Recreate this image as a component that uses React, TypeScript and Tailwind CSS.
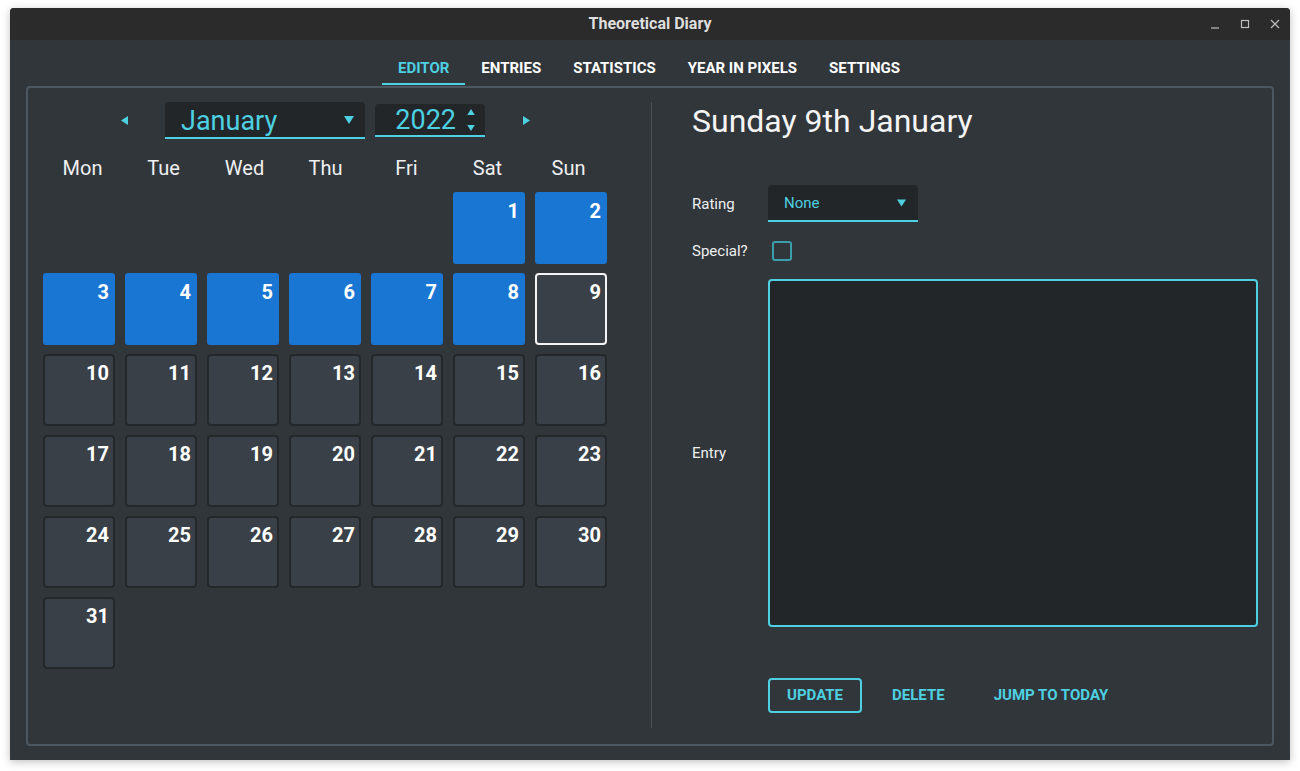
import React from "react";

const CYAN = "#4dd0e1";

function TriDown({ w = 10, h = 8, color = CYAN }: { w?: number; h?: number; color?: string }) {
  return (
    <svg width={w} height={h} viewBox="0 0 10 8">
      <polygon points="0,0 10,0 5,8" fill={color} />
    </svg>
  );
}
function TriUp({ w = 8, h = 6 }: { w?: number; h?: number }) {
  return (
    <svg width={w} height={h} viewBox="0 0 10 8">
      <polygon points="0,8 10,8 5,0" fill={CYAN} />
    </svg>
  );
}
function TriLeft() {
  return (
    <svg width="7" height="9" viewBox="0 0 7 9">
      <polygon points="7,0 7,9 0,4.5" fill={CYAN} />
    </svg>
  );
}
function TriRight() {
  return (
    <svg width="7" height="9" viewBox="0 0 7 9">
      <polygon points="0,0 0,9 7,4.5" fill={CYAN} />
    </svg>
  );
}

type Cell = { day: number | null; kind: "blue" | "grey" | "sel" | "none" };

function buildCells(): Cell[] {
  const cells: Cell[] = [];
  for (let i = 0; i < 5; i++) cells.push({ day: null, kind: "none" });
  for (let d = 1; d <= 31; d++) {
    if (d <= 8) cells.push({ day: d, kind: "blue" });
    else if (d === 9) cells.push({ day: d, kind: "sel" });
    else cells.push({ day: d, kind: "grey" });
  }
  return cells;
}

function DayCell({ c }: { c: Cell }) {
  if (c.kind === "none") return <div className="w-[72px] h-[72px]" />;
  const cls =
    c.kind === "blue"
      ? "bg-[#1976d2] border-[#1976d2] rounded-[3px]"
      : c.kind === "sel"
      ? "bg-[#394047] border-[#f4f4f4] rounded-[4px]"
      : "bg-[#394047] border-[#24282b] rounded-[4px]";
  return (
    <div className={`w-[72px] h-[72px] border-2 ${cls} flex justify-end items-start pr-[4px] pt-[5px]`}>
      <span className="text-[20px] leading-[24px] font-bold text-white">{c.day}</span>
    </div>
  );
}

export default function App() {
  const cells = buildCells();
  const days = ["Mon", "Tue", "Wed", "Thu", "Fri", "Sat", "Sun"];
  const tabs = ["EDITOR", "ENTRIES", "STATISTICS", "YEAR IN PIXELS", "SETTINGS"];
  return (
    <div
      className="w-[1300px] h-[771px] bg-white pt-[8px] pl-[10px] overflow-hidden"
      style={{ fontFamily: "Roboto, 'Liberation Sans', sans-serif" }}
    >
      <div className="w-[1280px] h-[752px] bg-[#31363b] rounded-t-[4px] shadow-[0_2px_8px_rgba(0,0,0,0.25)] flex flex-col">
        {/* Title bar */}
        <div className="h-[32px] bg-[#2b2b2b] rounded-t-[4px] relative flex items-center justify-center shrink-0">
          <span className="text-[16px] font-bold text-[#dedede]">Theoretical Diary</span>
          <div className="absolute right-[10px] top-0 h-[32px] flex items-center gap-[20px]">
            <svg width="10" height="10" viewBox="0 0 10 10">
              <line x1="1" y1="9" x2="9" y2="9" stroke="#bdbdbd" strokeWidth="1.2" />
            </svg>
            <svg width="10" height="10" viewBox="0 0 10 10">
              <rect x="1.5" y="1.5" width="7" height="7" fill="none" stroke="#bdbdbd" strokeWidth="1.2" />
            </svg>
            <svg width="10" height="10" viewBox="0 0 10 10">
              <path d="M1 1 L9 9 M9 1 L1 9" stroke="#bdbdbd" strokeWidth="1.2" />
            </svg>
          </div>
        </div>

        {/* Body */}
        <div className="flex-1 px-[16px] pb-[14px] flex flex-col">
          {/* Tabs */}
          <div className="flex justify-center pt-[12px] shrink-0 -ml-[2px]">
            {tabs.map((t, i) => (
              <div
                key={t}
                className={`h-[33px] px-[16px] flex items-center text-[15px] font-bold border-b-2 ${
                  i === 0 ? "text-[#4dd0e1] border-[#4dd0e1]" : "text-white border-transparent"
                }`}
              >
                <span className="mt-[2px]">{t}</span>
              </div>
            ))}
          </div>

          {/* Panel */}
          <div className="mt-[1px] h-[660px] border-2 border-[#4d5760] rounded-[4px] flex pt-[14px] pb-[16px]">
            {/* Left: calendar */}
            <div className="w-[623px] pl-[15px] shrink-0">
              <div className="w-[564px] h-[37px] flex items-center justify-center">
                <div className="w-[30px] flex justify-center">
                  <TriLeft />
                </div>
                <div className="w-[26px]" />
                <div className="w-[200px] h-[37px] bg-[#232629] rounded-t-[4px] border-b-2 border-[#4dd0e1] flex items-center pl-[16px] pr-[11px]">
                  <span className="text-[27px] leading-[30px] text-[#4dd0e1] flex-1 mt-[2px]">January</span>
                  <TriDown w={10} h={8} />
                </div>
                <div className="w-[10px]" />
                <div className="w-[110px] h-[33px] bg-[#232629] rounded-t-[4px] border-b-2 border-[#4dd0e1] flex items-center justify-end pr-[10px]">
                  <span className="text-[27px] leading-[30px] text-[#4dd0e1] mt-[1px]">2022</span>
                  <div className="flex flex-col items-center justify-center gap-[10px] ml-[11px]">
                    <TriUp w={8} h={6} />
                    <TriDown w={8} h={6} />
                  </div>
                </div>
                <div className="w-[26px]" />
                <div className="w-[30px] flex justify-center">
                  <TriRight />
                </div>
              </div>

              <div className="-ml-[1px] mt-[9px] h-[40px] grid grid-cols-[repeat(7,81px)] items-center">
                {days.map((d) => (
                  <div key={d} className="text-center text-[20px] text-[#eff0f1]">
                    {d}
                  </div>
                ))}
              </div>

              <div className="mt-[4px] grid grid-cols-[repeat(7,72px)] gap-x-[10px] gap-y-[9px]">
                {cells.map((c, i) => (
                  <DayCell key={i} c={c} />
                ))}
              </div>
            </div>

            {/* Divider */}
            <div className="w-[1px] bg-[#4a5157] shrink-0" />

            {/* Right: editor */}
            <div className="flex-1 pl-[40px] pr-[14px] flex flex-col">
              <div className="h-[38px] text-[32px] leading-[38px] text-[#f4f4f4]">Sunday 9th January</div>

              <div className="mt-[45px] grid grid-cols-[76px_1fr] gap-y-[10px]">
                <div className="h-[37px] flex items-center text-[15px] text-[#eff0f1] pt-[1px]">Rating</div>
                <div className="w-[150px] h-[37px] bg-[#232629] rounded-t-[4px] border-b-2 border-[#4dd0e1] flex items-center pl-[16px] pr-[12px]">
                  <span className="flex-1 text-[15px] text-[#4dd0e1] mt-[1px]">None</span>
                  <TriDown w={9} h={8} />
                </div>

                <div className="h-[37px] flex items-center text-[15px] text-[#eff0f1] pt-[1px]">Special?</div>
                <div className="h-[37px] flex items-center pl-[4px]">
                  <div className="w-[20px] h-[20px] border-2 border-[#3c9dab] rounded-[3px]" />
                </div>

                <div className="h-[348px] flex items-center text-[15px] text-[#eff0f1]">Entry</div>
                <div className="h-[348px] bg-[#232629] border-2 border-[#4dd0e1] rounded-[4px]" />
              </div>

              <div className="mt-[51px] ml-[76px] flex gap-[15px]">
                <div className="h-[35px] px-[17px] border-2 border-[#4dd0e1] rounded-[4px] flex items-center text-[15px] font-bold text-[#4dd0e1]">
                  UPDATE
                </div>
                <div className="h-[35px] px-[13px] border-2 border-transparent flex items-center text-[15px] font-bold text-[#4dd0e1]">
                  DELETE
                </div>
                <div className="h-[35px] px-[17px] border-2 border-transparent flex items-center text-[15px] font-bold text-[#4dd0e1]">
                  JUMP TO TODAY
                </div>
              </div>
            </div>
          </div>
        </div>
      </div>
    </div>
  );
}
